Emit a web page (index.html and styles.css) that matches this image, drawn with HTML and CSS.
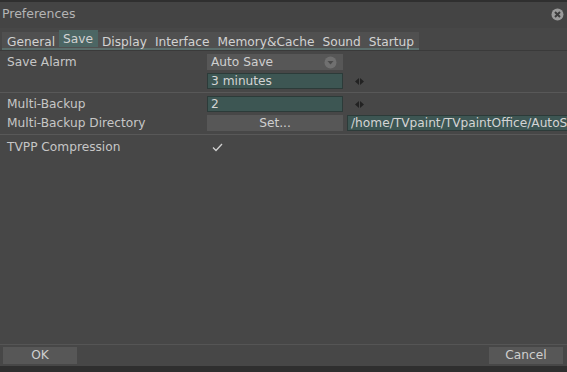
FILE: index.html
```html
<!DOCTYPE html>
<html lang="en">
<head>
  <meta charset="UTF-8">
  <meta name="viewport" content="width=device-width, initial-scale=1.0">
  <title>Preferences</title>
  <link rel="stylesheet" href="styles.css">
</head>
<body>
  <div class="window">
    <div class="titlebar">
      <span class="title">Preferences</span>
      <svg class="close" width="13" height="13" viewBox="0 0 13 13">
        <circle cx="6.5" cy="6.5" r="6" fill="#9a9a9a"/>
        <path d="M4 4 L9 9 M9 4 L4 9" stroke="#3c3c3c" stroke-width="2"/>
      </svg>
    </div>

    <div class="tabrow">
      <div class="tabs">
        <span class="tab">General</span>
        <span class="tab active">Save</span>
        <span class="tab">Display</span>
        <span class="tab">Interface</span>
        <span class="tab">Memory&amp;Cache</span>
        <span class="tab">Sound</span>
        <span class="tab">Startup</span>
      </div>
    </div>

    <div class="group">
      <div class="label">Save Alarm</div>
      <div class="select">Auto Save
        <svg width="13" height="13" viewBox="0 0 13 13">
          <circle cx="6.5" cy="6.5" r="6" fill="#707070"/>
          <path d="M3.5 5 L9.5 5 L6.5 8.5 Z" fill="#4a4a4a"/>
        </svg>
      </div>
      <div></div>
      <div></div>
      <div class="field">3 minutes</div>
      <div class="spin"><svg width="9" height="7" viewBox="0 0 9 7"><path d="M0 3.5 L4 0 L4 7 Z M5 0 L9 3.5 L5 7 Z" fill="#222"/></svg></div>
    </div>

    <div class="group">
      <div class="label">Multi-Backup</div>
      <div class="field">2</div>
      <div class="spin"><svg width="9" height="7" viewBox="0 0 9 7"><path d="M0 3.5 L4 0 L4 7 Z M5 0 L9 3.5 L5 7 Z" fill="#222"/></svg></div>
      <div class="label">Multi-Backup Directory</div>
      <div class="button">Set...</div>
      <div class="field path">/home/TVpaint/TVpaintOffice/AutoSave</div>
    </div>

    <div class="group last">
      <div class="label">TVPP Compression</div>
      <div class="check">
        <svg width="11" height="9" viewBox="0 0 11 9"><path d="M1 4.5 L4 7.5 L10 1" fill="none" stroke="#d0d0d0" stroke-width="1.3"/></svg>
      </div>
      <div></div>
    </div>

    <div class="spacer"></div>

    <div class="footer">
      <div class="button wide">OK</div>
      <div class="button wide">Cancel</div>
    </div>
  </div>
</body>
</html>
```

FILE: styles.css
```css
html, body {
  margin: 0;
  height: 100%;
  overflow: hidden;
}
body {
  background: #474747;
  font-family: "DejaVu Sans", sans-serif;
  font-size: 12.2px;
  color: #c6c6c6;
}
.window {
  display: flex;
  flex-direction: column;
  height: 100%;
  border-top: 2px solid #2f2f2f;
  border-bottom: 6px solid #2f2f2f;
  box-sizing: border-box;
}
.titlebar {
  display: flex;
  align-items: flex-start;
  justify-content: space-between;
  height: 26px;
  box-sizing: border-box;
  padding: 4px 3px 0 2px;
  background: #444;
}
.title {
  color: #b4b4b4;
  font-size: 12.5px;
  line-height: 15px;
}
.close {
  margin-top: 2px;
}
.tabrow {
  height: 22px;
  display: flex;
  align-items: flex-end;
  border-bottom: 1px solid #3a3a3a;
}
.tabs {
  display: flex;
  margin-left: 2px;
  height: 16px;
  background: #505050;
  border-bottom: 2px solid #5b6e6c;
  padding-right: 1px;
}
.tab {
  padding: 0 4px;
  height: 16px;
  line-height: 20px;
  color: #d2d2d2;
  white-space: nowrap;
}
.tab:first-child {
  padding-left: 5px;
}
.tab.active {
  background: #4c6664;
  height: 17px;
  line-height: 18px;
  margin-top: -2px;
  padding: 0 5px 0 4px;
}
.group {
  display: grid;
  grid-template-columns: 200px 136px 1fr;
  grid-auto-rows: 16px;
  row-gap: 3px;
  padding: 3px 0 3px 7px;
  border-bottom: 1px solid #585858;
}
.group:first-of-type {
  grid-template-rows: 17px 16px;
  padding-bottom: 2px;
}
.group.last {
  border-bottom: none;
  padding-top: 4px;
}
.label {
  line-height: 17px;
  white-space: nowrap;
}
.select {
  display: flex;
  align-items: center;
  justify-content: space-between;
  background: #575757;
  padding: 0 6px 0 4px;
  color: #cfcfcf;
}
.field {
  background: #3d5653;
  border: 1px solid #2c3b39;
  padding: 0 3px;
  line-height: 15px;
  color: #d4d4d4;
  white-space: nowrap;
  overflow: hidden;
}
.path {
  margin-left: 4px;
  margin-right: -20px;
}
.spin {
  display: flex;
  align-items: center;
  padding-left: 12px;
}
.button {
  background: #575757;
  text-align: center;
  line-height: 17px;
  color: #cfcfcf;
}
.check {
  display: flex;
  align-items: center;
  padding-left: 5px;
}
.spacer {
  flex: 1;
}
.footer {
  display: flex;
  justify-content: space-between;
  border-top: 1px solid #555;
  padding: 2px 4px 2px 3px;
}
.button.wide {
  width: 74px;
  height: 17px;
  line-height: 17px;
}
```
